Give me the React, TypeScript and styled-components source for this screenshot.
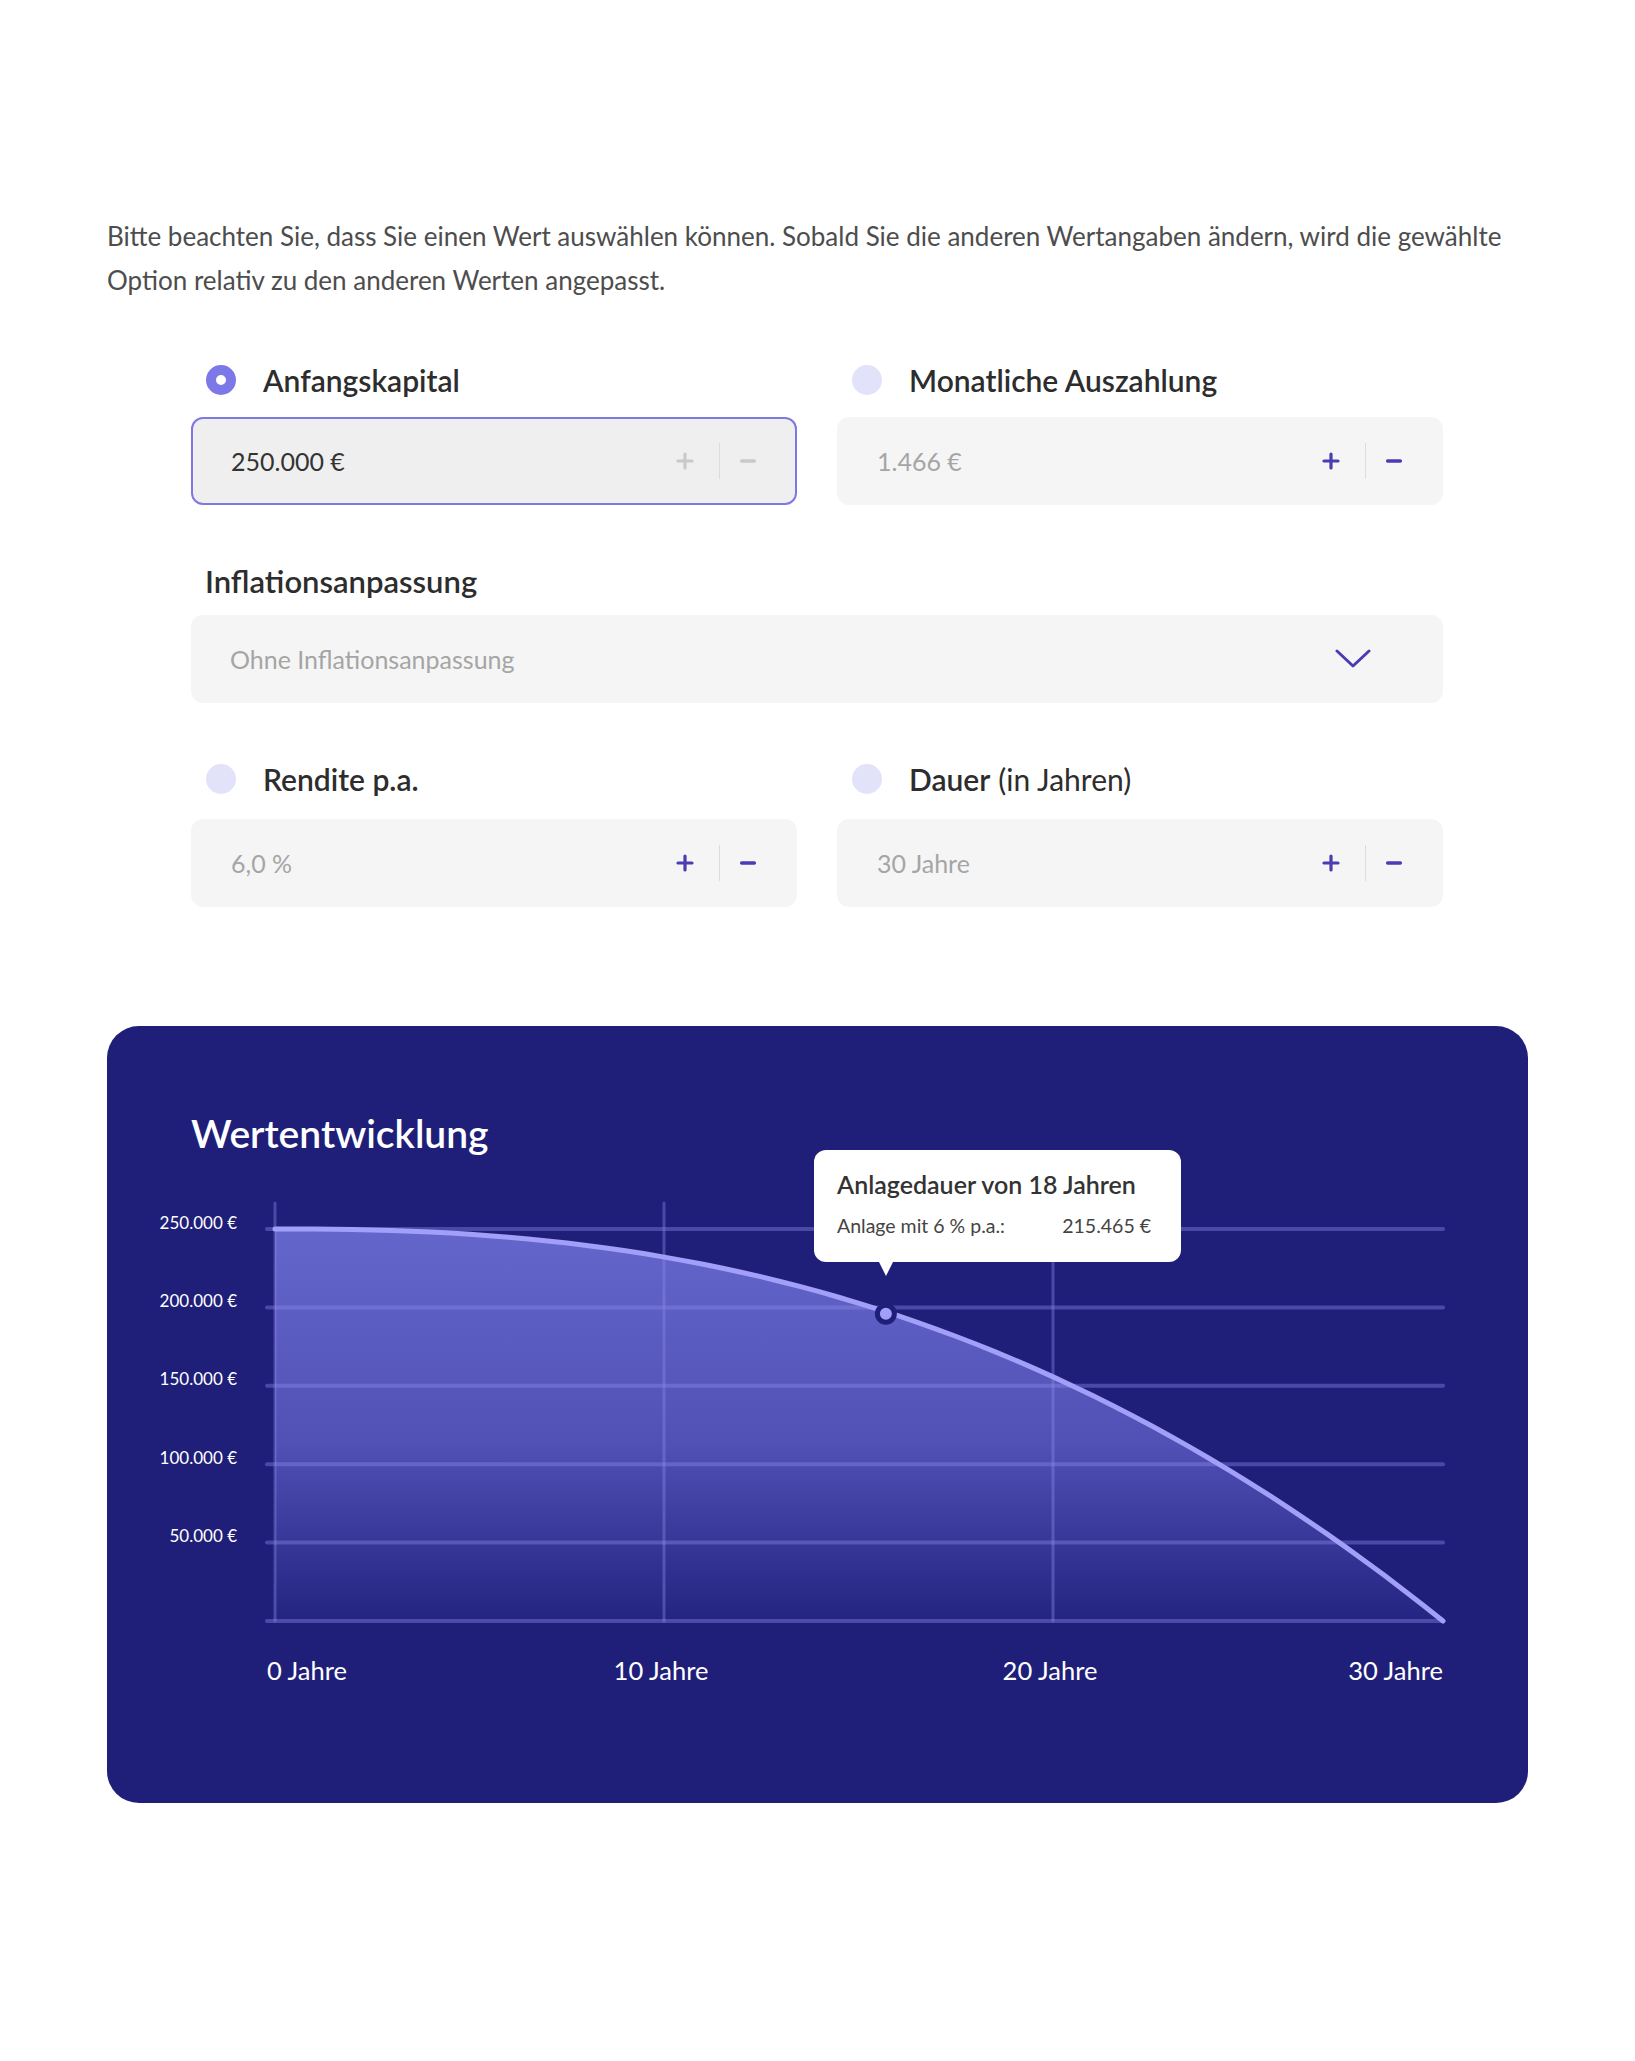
import React from 'react';
import styled, {createGlobalStyle} from 'styled-components';
import {Plus, Minus} from 'lucide-react';

const GlobalStyle = createGlobalStyle`
  body {
    margin: 0;
    background: #FFFFFF;
    font-family: Lato, "Noto Sans", sans-serif;
    color: #2d2d2d;
  }
`;

const Wrapper = styled.div`
  width: 1421px;
  margin: 0 auto;
  padding: 214px 0 200px;
`;

const Intro = styled.p`
  margin: 0;
  font-size: 26px;
  line-height: 44px;
  color: #4d4d4d;
`;

const Form = styled.div`
  margin-top: 58px;
  padding: 0 85px 0 84px;
  display: flex;
  flex-direction: column;
  gap: 56px;
`;

const Row = styled.div<{ $gap?: number }>`
  display: grid;
  grid-template-columns: 1fr 1fr;
  column-gap: 40px;

  > div {
    gap: ${p => p.$gap ?? 17}px;
  }
`;

const Field = styled.div<{ $tight?: boolean }>`
  display: flex;
  flex-direction: column;
  gap: ${p => (p.$tight ? '14px' : '17px')};
`;

const FieldLabel = styled.label`
  height: 40px;
  display: flex;
  align-items: center;
  gap: 27px;
  padding-left: 15px;
  font-size: 30px;
  color: #2d2d2d;

  > b {
    font-weight: 600;
  }

  > em {
    font-style: normal;
    font-weight: 400;
    margin-left: -19px;
  }
`;

const Radio = styled.i<{ $checked?: boolean }>`
  display: block;
  width: 30px;
  height: 30px;
  border-radius: 50%;
  flex-shrink: 0;
  box-sizing: border-box;
  background: ${p => (p.$checked ? '#FFFFFF' : '#E3E2FB')};
  border: ${p => (p.$checked ? '10px solid #7D78E8' : 'none')};
`;

const InputBox = styled.div<{ $active?: boolean }>`
  height: 88px;
  box-sizing: border-box;
  border-radius: 12px;
  display: flex;
  align-items: center;
  justify-content: space-between;
  padding: 0 36px 0 38px;
  background: ${p => (p.$active ? '#EFEFEF' : '#F5F5F5')};
  border: 2px solid ${p => (p.$active ? '#7D78E3' : '#F5F5F5')};
`;

const Value = styled.span<{ $muted?: boolean }>`
  font-size: 25px;
  color: ${p => (p.$muted ? '#A5A5A5' : '#333333')};
`;

const Controls = styled.div<{ $disabled?: boolean }>`
  display: flex;
  align-items: center;
  color: ${p => (p.$disabled ? '#C9C9C9' : '#4A3DB3')};

  > svg:first-child {
    margin-right: 22px;
  }

  > svg:last-child {
    margin-left: 17px;
  }
`;

const Divider = styled.span`
  width: 1px;
  height: 36px;
  background: #DCDCDC;
`;

const SelectLabel = styled.div`
  height: 40px;
  display: flex;
  align-items: center;
  padding-left: 14px;
  font-size: 31px;
  font-weight: 600;
`;

const SelectBox = styled.div`
  height: 88px;
  border-radius: 12px;
  background: #F5F5F5;
  display: flex;
  align-items: center;
  justify-content: space-between;
  padding: 0 72px 0 39px;
`;

const Card = styled.section`
  margin-top: 119px;
  background: #1F1F7A;
  border-radius: 32px;
  padding: 83px 0 113px;
`;

const CardTitle = styled.h2`
  margin: 0;
  padding-left: 84px;
  font-size: 39px;
  line-height: 48px;
  font-weight: 600;
  color: #FFFFFF;
`;

const ChartArea = styled.div`
  position: relative;
  margin-top: 33px;
  height: 500px;

  > svg {
    display: block;
  }
`;

const Tooltip = styled.div`
  position: absolute;
  left: 707px;
  top: -40px;
  width: 367px;
  box-sizing: border-box;
  padding: 17px 30px 0 23px;
  height: 112px;
  background: #FFFFFF;
  border-radius: 12px;
  color: #333333;

  &::after {
    content: '';
    position: absolute;
    left: 64px;
    bottom: -14px;
    border-left: 8px solid transparent;
    border-right: 8px solid transparent;
    border-top: 16px solid #FFFFFF;
    border-radius: 3px;
  }
`;

const TooltipTitle = styled.div`
  font-size: 25px;
  font-weight: 600;
  line-height: 34px;
`;

const TooltipRow = styled.div`
  display: flex;
  justify-content: space-between;
  margin-top: 13px;
  font-size: 19.5px;
  color: #444444;
`;

const Chevron = () => (
  <svg width="36" height="20" viewBox="0 0 36 20" fill="none">
    <polyline points="2,2 18,17 34,2" stroke="#4A3DB3" strokeWidth="3" strokeLinecap="round" strokeLinejoin="round"/>
  </svg>
);

type StepperProps = { value: string; active?: boolean };

const Stepper: React.FC<StepperProps> = ({value, active}) => (
  <InputBox $active={active}>
    <Value $muted={!active}>{value}</Value>
    <Controls $disabled={active}>
      <Plus size={24} strokeWidth={3.2}/>
      <Divider/>
      <Minus size={22} strokeWidth={3.6}/>
    </Controls>
  </InputBox>
);

// chart geometry, in px of the card
const X0 = 168;
const X1 = 1336;
const Y_TOP = 39;
const Y_BOTTOM = 431;
const STEP = (Y_BOTTOM - Y_TOP) / 5;
const curveY = (s: number) => Y_TOP + (Y_BOTTOM - Y_TOP) * Math.pow(s, 2.4);

const curvePoints: string[] = [];
for (let i = 0; i <= 60; i++) {
  const s = i / 60;
  curvePoints.push(`${(X0 + (X1 - X0) * s).toFixed(1)},${curveY(s).toFixed(1)}`);
}
const linePath = 'M' + curvePoints.join(' L');
const areaPath = `${linePath} L${X1},${Y_BOTTOM} L${X0},${Y_BOTTOM} Z`;
const markS = 0.523;

const yLabels = ['250.000 €', '200.000 €', '150.000 €', '100.000 €', '50.000 €'];

const Chart = () => (
  <svg width="1421" height="500" viewBox="0 0 1421 500">
    <defs>
      <linearGradient id="area" x1="0" y1={Y_TOP} x2="0" y2={Y_BOTTOM} gradientUnits="userSpaceOnUse">
        <stop offset="0" stopColor="#6566CB"/>
        <stop offset="0.55" stopColor="#5050B5"/>
        <stop offset="1" stopColor="#232381"/>
      </linearGradient>
    </defs>
    <path d={areaPath} fill="url(#area)"/>
    {[0, 1, 2, 3, 4, 5].map(i => (
      <line key={i} x1={160} x2={X1} y1={Y_TOP + STEP * i} y2={Y_TOP + STEP * i}
            stroke="#8D8AE8" strokeOpacity="0.4" strokeWidth="4" strokeLinecap="round"/>
    ))}
    {[168, 557, 946].map(x => (
      <line key={x} x1={x} x2={x} y1={13} y2={Y_BOTTOM}
            stroke="#8D8AE8" strokeOpacity="0.4" strokeWidth="3" strokeLinecap="round"/>
    ))}
    <path d={linePath} fill="none" stroke="#A19FF7" strokeWidth="5" strokeLinecap="round"/>
    <circle cx={X0 + (X1 - X0) * markS} cy={curveY(markS) + 2} r="8.5" fill="#A19FF7" stroke="#1F1F7A" strokeWidth="5"/>
    {yLabels.map((label, i) => (
      <text key={label} x={130} y={Y_TOP + STEP * i - 7} textAnchor="end" dominantBaseline="central"
            fill="#FFFFFF" fontSize="17" fontFamily="Lato, sans-serif">{label}</text>
    ))}
    <g fill="#FFFFFF" fontSize="25.5" fontFamily="Lato, sans-serif" dominantBaseline="central">
      <text x={160} y={480} textAnchor="start">0 Jahre</text>
      <text x={554} y={480} textAnchor="middle">10 Jahre</text>
      <text x={943} y={480} textAnchor="middle">20 Jahre</text>
      <text x={1336} y={480} textAnchor="end">30 Jahre</text>
    </g>
  </svg>
);

const App: React.FC = () => {
  return (
    <Wrapper>
      <GlobalStyle/>
      <Intro>
        Bitte beachten Sie, dass Sie einen Wert auswählen können. Sobald Sie die anderen Wertangaben ändern, wird die
        gewählte Option relativ zu den anderen Werten angepasst.
      </Intro>

      <Form>
        <Row>
          <Field>
            <FieldLabel><Radio $checked/><b>Anfangskapital</b></FieldLabel>
            <Stepper value="250.000 €" active/>
          </Field>
          <Field>
            <FieldLabel><Radio/><b>Monatliche Auszahlung</b></FieldLabel>
            <Stepper value="1.466 €"/>
          </Field>
        </Row>

        <Field $tight>
          <SelectLabel>Inflationsanpassung</SelectLabel>
          <SelectBox>
            <Value $muted>Ohne Inflationsanpassung</Value>
            <Chevron/>
          </SelectBox>
        </Field>

        <Row $gap={20}>
          <Field>
            <FieldLabel><Radio/><b>Rendite p.a.</b></FieldLabel>
            <Stepper value="6,0 %"/>
          </Field>
          <Field>
            <FieldLabel><Radio/><b>Dauer</b><em>(in Jahren)</em></FieldLabel>
            <Stepper value="30 Jahre"/>
          </Field>
        </Row>
      </Form>

      <Card>
        <CardTitle>Wertentwicklung</CardTitle>
        <ChartArea>
          <Chart/>
          <Tooltip>
            <TooltipTitle>Anlagedauer von 18 Jahren</TooltipTitle>
            <TooltipRow>
              <span>Anlage mit 6 % p.a.:</span>
              <span>215.465 €</span>
            </TooltipRow>
          </Tooltip>
        </ChartArea>
      </Card>
    </Wrapper>
  );
};

export default App;
